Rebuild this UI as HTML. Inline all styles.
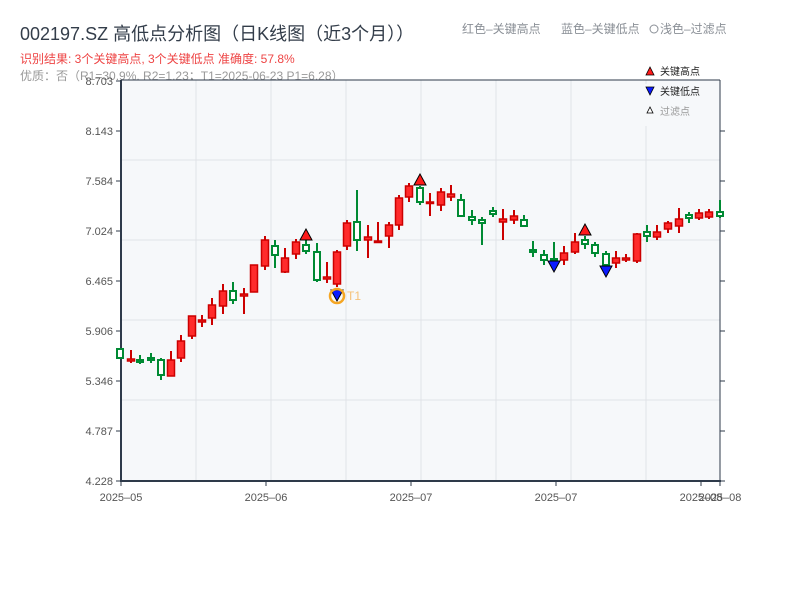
<!DOCTYPE html>
<html><head><meta charset="utf-8"><style>
html,body{margin:0;padding:0;background:#fff;width:800px;height:600px;overflow:hidden}
svg text{font-family:"Liberation Sans","Noto Sans CJK SC",sans-serif}
.r line{stroke:#cc0000;stroke-width:2}
.r rect{fill:#ff2b2b;stroke:#cc0000;stroke-width:1.5}
.g line{stroke:#008a33;stroke-width:2}
.g rect{fill:#fff;stroke:#008a33;stroke-width:2}
</style></head><body>
<svg width="800" height="600" xmlns="http://www.w3.org/2000/svg">
<text x="20" y="40" font-size="18" fill="#333d4a">002197.SZ 高低点分析图（日K线图（近3个月））</text>
<text x="462" y="33" font-size="12" fill="#8a8f96">红色–关键高点</text>
<text x="561" y="33" font-size="12" fill="#8a8f96">蓝色–关键低点</text>
<circle cx="654" cy="29" r="4" fill="none" stroke="#8a8f96"/>
<text x="660" y="33" font-size="12" fill="#8a8f96">浅色–过滤点</text>
<text x="20" y="63" font-size="12" fill="#ee4444">识别结果: 3个关键高点, 3个关键低点  准确度: 57.8%</text>
<text x="20" y="80" font-size="12" fill="#999">优质：否（R1=30.9%, R2=1.23；T1=2025-06-23 P1=6.28）</text>
<rect x="121" y="80" width="599" height="401" fill="#f6f8fa"/>
<g stroke="#e0e3e8" stroke-width="1">
<line x1="196" y1="80" x2="196" y2="481"/><line x1="271" y1="80" x2="271" y2="481"/><line x1="346" y1="80" x2="346" y2="481"/><line x1="421" y1="80" x2="421" y2="481"/><line x1="496" y1="80" x2="496" y2="481"/><line x1="571" y1="80" x2="571" y2="481"/><line x1="646" y1="80" x2="646" y2="481"/>
<line x1="121" y1="160" x2="720" y2="160"/><line x1="121" y1="240" x2="720" y2="240"/><line x1="121" y1="320" x2="720" y2="320"/><line x1="121" y1="400" x2="720" y2="400"/>
</g>
<g stroke="#2e3a4a" stroke-width="1">
<line x1="121" y1="80" x2="720" y2="80"/><line x1="720" y1="80" x2="720" y2="481"/>
<line x1="116" y1="81" x2="121" y2="81"/><line x1="116" y1="131" x2="121" y2="131"/><line x1="116" y1="181" x2="121" y2="181"/><line x1="116" y1="231" x2="121" y2="231"/><line x1="116" y1="281" x2="121" y2="281"/><line x1="116" y1="331" x2="121" y2="331"/><line x1="116" y1="381" x2="121" y2="381"/><line x1="116" y1="431" x2="121" y2="431"/><line x1="116" y1="481" x2="121" y2="481"/>
<line x1="720" y1="131" x2="725" y2="131"/><line x1="720" y1="181" x2="725" y2="181"/><line x1="720" y1="231" x2="725" y2="231"/><line x1="720" y1="281" x2="725" y2="281"/><line x1="720" y1="331" x2="725" y2="331"/><line x1="720" y1="381" x2="725" y2="381"/><line x1="720" y1="431" x2="725" y2="431"/><line x1="720" y1="481" x2="725" y2="481"/>
<line x1="121" y1="481" x2="121" y2="486"/><line x1="266" y1="481" x2="266" y2="486"/><line x1="411" y1="481" x2="411" y2="486"/><line x1="556" y1="481" x2="556" y2="486"/><line x1="701" y1="481" x2="701" y2="486"/><line x1="720" y1="481" x2="720" y2="486"/>
</g>
<line x1="121" y1="80" x2="121" y2="482" stroke="#2e3a4a" stroke-width="2"/>
<line x1="120" y1="481" x2="721" y2="481" stroke="#2e3a4a" stroke-width="2"/>
<g font-size="11" fill="#555" text-anchor="end">
<text x="113" y="85">8.703</text><text x="113" y="135">8.143</text><text x="113" y="185">7.584</text><text x="113" y="235">7.024</text><text x="113" y="285">6.465</text><text x="113" y="335">5.906</text><text x="113" y="385">5.346</text><text x="113" y="435">4.787</text><text x="113" y="485">4.228</text>
</g>
<g font-size="11" fill="#555" text-anchor="middle">
<text x="121" y="501">2025–05</text><text x="266" y="501">2025–06</text><text x="411" y="501">2025–07</text><text x="556" y="501">2025–07</text><text x="701" y="501">2025–08</text><text x="720" y="501">2025–08</text>
</g>
<g class="g"><line x1="120" y1="348" x2="120" y2="359"/><rect x="117" y="349" width="6" height="9"/></g>
<g class="r"><line x1="131" y1="350" x2="131" y2="363"/><rect x="127.5" y="359" width="7" height="2"/></g>
<g class="g"><line x1="140" y1="355" x2="140" y2="364"/><rect x="137" y="360" width="6" height="2"/></g>
<g class="g"><line x1="151" y1="353" x2="151" y2="363"/><rect x="148" y="358" width="6" height="2"/></g>
<g class="g"><line x1="161" y1="358" x2="161" y2="380"/><rect x="158" y="360" width="6" height="15"/></g>
<g class="r"><line x1="171" y1="351" x2="171" y2="376"/><rect x="167.5" y="360" width="7" height="16"/></g>
<g class="r"><line x1="181" y1="335" x2="181" y2="362"/><rect x="177.5" y="341" width="7" height="17"/></g>
<g class="r"><line x1="192" y1="316" x2="192" y2="339"/><rect x="188.5" y="316" width="7" height="20"/></g>
<g class="r"><line x1="202" y1="315" x2="202" y2="327"/><rect x="198.5" y="320" width="7" height="2"/></g>
<g class="r"><line x1="212" y1="298" x2="212" y2="325"/><rect x="208.5" y="305" width="7" height="13"/></g>
<g class="r"><line x1="223" y1="284" x2="223" y2="314"/><rect x="219.5" y="291" width="7" height="15"/></g>
<g class="g"><line x1="233" y1="282" x2="233" y2="304"/><rect x="230" y="291" width="6" height="9"/></g>
<g class="r"><line x1="244" y1="288" x2="244" y2="314"/><rect x="240.5" y="294" width="7" height="2"/></g>
<g class="r"><line x1="254" y1="265" x2="254" y2="292"/><rect x="250.5" y="265" width="7" height="27"/></g>
<g class="r"><line x1="265" y1="236" x2="265" y2="270"/><rect x="261.5" y="240" width="7" height="26"/></g>
<g class="g"><line x1="275" y1="240" x2="275" y2="268"/><rect x="272" y="246" width="6" height="9"/></g>
<g class="r"><line x1="285" y1="248" x2="285" y2="273"/><rect x="281.5" y="258" width="7" height="14"/></g>
<g class="r"><line x1="296" y1="239" x2="296" y2="259"/><rect x="292.5" y="242" width="7" height="12"/></g>
<g class="g"><line x1="306" y1="240" x2="306" y2="254"/><rect x="303" y="245" width="6" height="6"/></g>
<g class="g"><line x1="317" y1="243" x2="317" y2="282"/><rect x="314" y="252" width="6" height="28"/></g>
<g class="r"><line x1="327" y1="262" x2="327" y2="283"/><rect x="323.5" y="277" width="7" height="2"/></g>
<g class="r"><line x1="337" y1="250" x2="337" y2="287"/><rect x="333.5" y="252" width="7" height="32"/></g>
<g class="r"><line x1="347" y1="220" x2="347" y2="250"/><rect x="343.5" y="223" width="7" height="23"/></g>
<g class="g"><line x1="357" y1="190" x2="357" y2="251"/><rect x="354" y="222" width="6" height="18"/></g>
<g class="r"><line x1="368" y1="225" x2="368" y2="258"/><rect x="364.5" y="237" width="7" height="3"/></g>
<g class="r"><line x1="378" y1="222" x2="378" y2="243"/><rect x="374.5" y="241" width="7" height="1.5"/></g>
<g class="r"><line x1="389" y1="222" x2="389" y2="248"/><rect x="385.5" y="225" width="7" height="11"/></g>
<g class="r"><line x1="399" y1="195" x2="399" y2="230"/><rect x="395.5" y="198" width="7" height="27"/></g>
<g class="r"><line x1="409" y1="183" x2="409" y2="202"/><rect x="405.5" y="186" width="7" height="11"/></g>
<g class="g"><line x1="420" y1="186" x2="420" y2="205"/><rect x="417" y="188" width="6" height="14"/></g>
<g class="r"><line x1="430" y1="193" x2="430" y2="216"/><rect x="426.5" y="202" width="7" height="1.5"/></g>
<g class="r"><line x1="441" y1="188" x2="441" y2="211"/><rect x="437.5" y="192" width="7" height="13"/></g>
<g class="r"><line x1="451" y1="185" x2="451" y2="201"/><rect x="447.5" y="194" width="7" height="3"/></g>
<g class="g"><line x1="461" y1="194" x2="461" y2="217"/><rect x="458" y="200" width="6" height="16"/></g>
<g class="g"><line x1="472" y1="210" x2="472" y2="225"/><rect x="469" y="217" width="6" height="3"/></g>
<g class="g"><line x1="482" y1="217" x2="482" y2="245"/><rect x="479" y="220" width="6" height="3"/></g>
<g class="g"><line x1="493" y1="207" x2="493" y2="217"/><rect x="490" y="211" width="6" height="3"/></g>
<g class="r"><line x1="503" y1="209" x2="503" y2="240"/><rect x="499.5" y="219" width="7" height="3"/></g>
<g class="r"><line x1="514" y1="210" x2="514" y2="224"/><rect x="510.5" y="216" width="7" height="4"/></g>
<g class="g"><line x1="524" y1="215" x2="524" y2="227"/><rect x="521" y="220" width="6" height="6"/></g>
<g class="g"><line x1="533" y1="241" x2="533" y2="257"/><rect x="530" y="250" width="6" height="2"/></g>
<g class="g"><line x1="544" y1="250" x2="544" y2="265"/><rect x="541" y="255" width="6" height="5"/></g>
<g class="g"><line x1="554" y1="242" x2="554" y2="260"/><rect x="551" y="259" width="6" height="1.5"/></g>
<g class="r"><line x1="564" y1="246" x2="564" y2="265"/><rect x="560.5" y="253" width="7" height="7"/></g>
<g class="r"><line x1="575" y1="233" x2="575" y2="254"/><rect x="571.5" y="242" width="7" height="10"/></g>
<g class="g"><line x1="585" y1="236" x2="585" y2="249"/><rect x="582" y="240" width="6" height="4"/></g>
<g class="g"><line x1="595" y1="242" x2="595" y2="257"/><rect x="592" y="245" width="6" height="8"/></g>
<g class="g"><line x1="606" y1="251" x2="606" y2="266"/><rect x="603" y="254" width="6" height="11"/></g>
<g class="r"><line x1="616" y1="251" x2="616" y2="268"/><rect x="612.5" y="258" width="7" height="5"/></g>
<g class="r"><line x1="626" y1="254" x2="626" y2="262"/><rect x="622.5" y="258" width="7" height="2"/></g>
<g class="r"><line x1="637" y1="233" x2="637" y2="263"/><rect x="633.5" y="234" width="7" height="27"/></g>
<g class="g"><line x1="647" y1="225" x2="647" y2="242"/><rect x="644" y="232" width="6" height="4"/></g>
<g class="r"><line x1="657" y1="225" x2="657" y2="240"/><rect x="653.5" y="232" width="7" height="5"/></g>
<g class="r"><line x1="668" y1="221" x2="668" y2="233"/><rect x="664.5" y="223" width="7" height="6"/></g>
<g class="r"><line x1="679" y1="208" x2="679" y2="233"/><rect x="675.5" y="219" width="7" height="7"/></g>
<g class="g"><line x1="689" y1="212" x2="689" y2="223"/><rect x="686" y="215" width="6" height="3"/></g>
<g class="r"><line x1="699" y1="209" x2="699" y2="220"/><rect x="695.5" y="213" width="7" height="5"/></g>
<g class="r"><line x1="709" y1="209" x2="709" y2="219"/><rect x="705.5" y="212" width="7" height="5"/></g>
<g class="g"><line x1="720" y1="200" x2="720" y2="218"/><rect x="717" y="212" width="6" height="4"/></g>
<g fill="#ff1a1a" stroke="#000" stroke-width="1">
<polygon points="306,229 300,240 312,240"/><polygon points="420,174 414,185 426,185"/><polygon points="585,224 579,235 591,235"/>
</g>
<g fill="#0a1aff" stroke="#000" stroke-width="1">
<polygon points="331,290 343,290 337,301"/><polygon points="548,261 560,261 554,272"/><polygon points="600,266 612,266 606,277"/>
</g>
<circle cx="337" cy="296" r="7" fill="none" stroke="#f5a623" stroke-width="2.5"/>
<text x="347" y="300" font-size="12" fill="#f5c27a">T1</text>
<rect x="644" y="84" width="74" height="42" fill="#f6f8fa"/>
<polygon points="650,67 646,75 654,75" fill="#ff1a1a" stroke="#000" stroke-width="0.8"/>
<text x="660" y="75" font-size="10" fill="#222">关键高点</text>
<polygon points="646,87 654,87 650,95" fill="#0a1aff" stroke="#000" stroke-width="0.8"/>
<text x="660" y="95" font-size="10" fill="#222">关键低点</text>
<polygon points="650,107 647,113 653,113" fill="#fff" stroke="#000" stroke-width="0.8"/>
<text x="660" y="115" font-size="10" fill="#999">过滤点</text>
</svg>
</body></html>
